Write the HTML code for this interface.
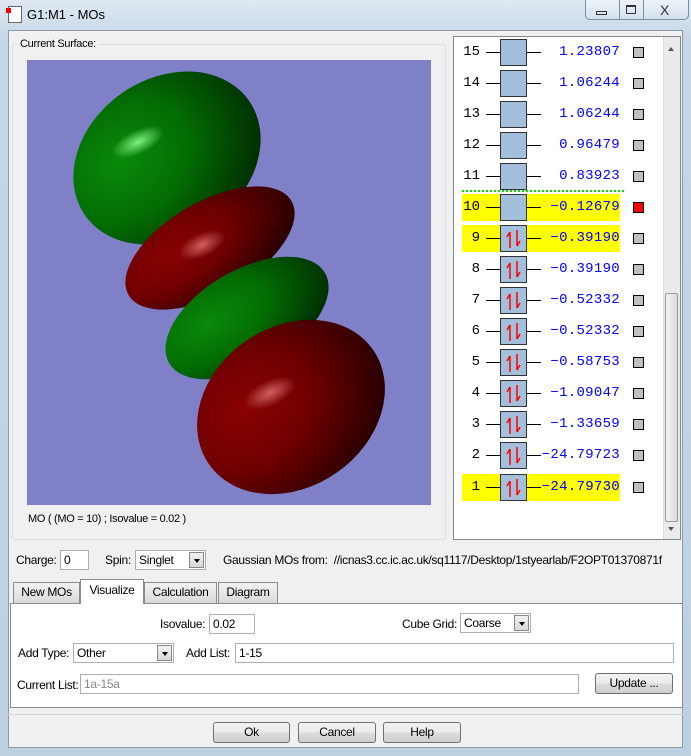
<!DOCTYPE html>
<html><head><meta charset="utf-8"><style>
*{margin:0;padding:0;box-sizing:border-box}
body{width:691px;height:756px;overflow:hidden;background:#c9d8e6;font-family:"Liberation Sans",sans-serif;font-size:12px;color:#000;position:relative;letter-spacing:-0.3px}
.a{position:absolute}
.frame{left:0;top:0;width:691px;height:756px;background:linear-gradient(#dfe9f3,#c5d6e6 40px,#bdd0e2);}
.content{left:8px;top:30px;width:675px;height:718px;background:#f0f0f0;border:1px solid #8d9aa8}
.row{position:absolute;left:462px;width:190px;height:27px}
.num{position:absolute;left:0;width:18px;text-align:right;top:5px;font-family:"Liberation Mono",monospace;font-size:14px;letter-spacing:0}
.ln{position:absolute;top:13px;height:1px;background:#000}
.box{position:absolute;left:38px;top:0;width:27px;height:27px;background:#a3bfdc;border:1px solid #333}
.en{position:absolute;left:70px;width:88px;text-align:right;top:5px;font-family:"Liberation Mono",monospace;font-size:14px;color:#0000ff;letter-spacing:0.3px}
.sq{position:absolute;left:171px;top:8px;width:11px;height:11px;background:#c0c0c0;border:1px solid #000}
.y{background:#ffff00}
.inp{position:absolute;background:#fff;border:1px solid #abadb3;height:20px;padding:2px 3px;font-size:12px}
.btn{position:absolute;border:1px solid #707070;border-radius:3px;background:linear-gradient(#f2f2f2,#ebebeb 50%,#dddddd 51%,#cfcfcf);text-align:center;line-height:19px;height:21px}
.dd{position:absolute;width:15px;height:16px;border:1px solid #888;background:linear-gradient(#f2f2f2,#d8d8d8)}
.dd:after{content:"";position:absolute;left:4px;top:6px;border:3px solid transparent;border-top:4px solid #000}
.tab{position:absolute;top:582px;height:21px;border:1px solid #898c95;border-bottom:none;background:linear-gradient(#f2f2f2,#d9d9d9);text-align:center;line-height:19px}
</style></head><body>
<div class="a frame"></div>
<div class="a" style="left:8px;top:6px;width:14px;height:17px;background:#fff;border:1px solid #666"></div>
<div class="a" style="left:6px;top:8px;width:5px;height:5px;background:#e00"></div>
<div class="a" style="left:27px;top:7px;font-size:13px;letter-spacing:0">G1:M1 - MOs</div>
<div class="a" style="left:585px;top:0;width:104px;height:20px;border:1px solid #7a8ea6;border-top:none;border-radius:0 0 5px 5px;background:linear-gradient(#eef3f9,#d5e1ee)"></div>
<div class="a" style="left:619px;top:0;width:1px;height:20px;background:#7a8ea6"></div>
<div class="a" style="left:643px;top:0;width:1px;height:20px;background:#7a8ea6"></div>
<div class="a" style="left:596px;top:11px;width:11px;height:4px;border:1px solid #333"></div>
<div class="a" style="left:626px;top:5px;width:10px;height:9px;border:1px solid #333;border-top-width:2px"></div>
<div class="a" style="left:660px;top:2px;font-size:14px;color:#333">X</div>
<div class="a content"></div>

<div class="a" style="left:12px;top:44px;width:434px;height:496px;border:1px solid #d5dfe5;border-radius:3px"></div>
<div class="a" style="left:17px;top:38px;padding:0 3px;background:#f0f0f0;font-size:11px">Current Surface:</div>
<div class="a" style="left:27px;top:60px;width:404px;height:445px;background:#8080c8;overflow:hidden">
<svg width="404" height="445" viewBox="27 60 404 445">
<defs>
<radialGradient id="g" cx="0.3" cy="0.35" r="0.8"><stop offset="0" stop-color="#0a8a0a"/><stop offset="0.45" stop-color="#036d03"/><stop offset="1" stop-color="#012601"/></radialGradient>
<radialGradient id="r" cx="0.3" cy="0.35" r="0.8"><stop offset="0" stop-color="#8a0202"/><stop offset="0.45" stop-color="#6e0000"/><stop offset="1" stop-color="#200000"/></radialGradient>
<radialGradient id="hg"><stop offset="0" stop-color="#7ef07e"/><stop offset="1" stop-color="#7ef07e" stop-opacity="0"/></radialGradient>
<radialGradient id="hr"><stop offset="0" stop-color="#d06060"/><stop offset="1" stop-color="#d06060" stop-opacity="0"/></radialGradient>
</defs>
<ellipse cx="167" cy="158" rx="100" ry="79" transform="rotate(-35 167 158)" fill="url(#g)"/>
<ellipse cx="138" cy="142" rx="28" ry="12" transform="rotate(-25 138 142)" fill="url(#hg)"/>
<line x1="161" y1="236" x2="228" y2="200" stroke="#9ff0f0" stroke-width="3"/>
<ellipse cx="210" cy="248" rx="94" ry="46" transform="rotate(-30 210 248)" fill="url(#r)"/>
<ellipse cx="202" cy="245" rx="25" ry="12" transform="rotate(-25 202 245)" fill="url(#hr)"/>
<ellipse cx="247" cy="318" rx="90" ry="48" transform="rotate(-30 247 318)" fill="url(#g)"/>
<line x1="230" y1="365" x2="297" y2="332" stroke="#90d8d8" stroke-width="3"/>
<ellipse cx="291" cy="407" rx="100" ry="80" transform="rotate(-35 291 407)" fill="url(#r)"/>
<ellipse cx="270" cy="393" rx="28" ry="13" transform="rotate(-25 270 393)" fill="url(#hr)"/>
</svg></div>
<div class="a" style="left:28px;top:513px;font-size:11px">MO ( (MO = 10) ; Isovalue = 0.02 )</div>

<div class="a" style="left:453px;top:36px;width:228px;height:504px;background:#fff;border:1px solid #828790"></div>
<div class="a" style="left:663px;top:37px;width:17px;height:502px;background:#eaeaea;border-left:1px solid #ddd"></div>
<div class="a" style="left:665px;top:293px;width:13px;height:229px;background:linear-gradient(90deg,#f3f3f3,#dcdcdc);border:1px solid #999;border-radius:2px"></div>
<div class="a" style="left:668px;top:44px;border:3px solid transparent;border-bottom:4px solid #555"></div>
<div class="a" style="left:668px;top:527px;border:3px solid transparent;border-top:4px solid #555"></div>
<div class="a" style="left:462px;top:190px;width:162px;border-top:2px dotted #00e000"></div>

<div class="row" style="top:39px"><div class="num">15</div><div class="ln" style="left:24px;width:55px"></div><div class="box"></div><div class="en">1.23807</div><div class="sq"></div></div>
<div class="row" style="top:70px"><div class="num">14</div><div class="ln" style="left:24px;width:55px"></div><div class="box"></div><div class="en">1.06244</div><div class="sq"></div></div>
<div class="row" style="top:101px"><div class="num">13</div><div class="ln" style="left:24px;width:55px"></div><div class="box"></div><div class="en">1.06244</div><div class="sq"></div></div>
<div class="row" style="top:132px"><div class="num">12</div><div class="ln" style="left:24px;width:55px"></div><div class="box"></div><div class="en">0.96479</div><div class="sq"></div></div>
<div class="row" style="top:163px"><div class="num">11</div><div class="ln" style="left:24px;width:55px"></div><div class="box"></div><div class="en">0.83923</div><div class="sq"></div></div>
<div class="row" style="top:194px"><div class="y a" style="left:0;top:0;width:158px;height:27px"></div><div class="num">10</div><div class="ln" style="left:24px;width:55px"></div><div class="box"></div><div class="en">−0.12679</div><div class="sq" style="background:#f00"></div></div>
<div class="row" style="top:225px"><div class="y a" style="left:0;top:0;width:158px;height:27px"></div><div class="num">9</div><div class="ln" style="left:24px;width:55px"></div><div class="box"><svg width="25" height="25"><path d="M9 22V6M9 6L6 11M16 4V20M16 20L19 15" stroke="#f00" stroke-width="1.5" fill="none"/></svg></div><div class="en">−0.39190</div><div class="sq"></div></div>
<div class="row" style="top:256px"><div class="num">8</div><div class="ln" style="left:24px;width:55px"></div><div class="box"><svg width="25" height="25"><path d="M9 22V6M9 6L6 11M16 4V20M16 20L19 15" stroke="#f00" stroke-width="1.5" fill="none"/></svg></div><div class="en">−0.39190</div><div class="sq"></div></div>
<div class="row" style="top:287px"><div class="num">7</div><div class="ln" style="left:24px;width:55px"></div><div class="box"><svg width="25" height="25"><path d="M9 22V6M9 6L6 11M16 4V20M16 20L19 15" stroke="#f00" stroke-width="1.5" fill="none"/></svg></div><div class="en">−0.52332</div><div class="sq"></div></div>
<div class="row" style="top:318px"><div class="num">6</div><div class="ln" style="left:24px;width:55px"></div><div class="box"><svg width="25" height="25"><path d="M9 22V6M9 6L6 11M16 4V20M16 20L19 15" stroke="#f00" stroke-width="1.5" fill="none"/></svg></div><div class="en">−0.52332</div><div class="sq"></div></div>
<div class="row" style="top:349px"><div class="num">5</div><div class="ln" style="left:24px;width:55px"></div><div class="box"><svg width="25" height="25"><path d="M9 22V6M9 6L6 11M16 4V20M16 20L19 15" stroke="#f00" stroke-width="1.5" fill="none"/></svg></div><div class="en">−0.58753</div><div class="sq"></div></div>
<div class="row" style="top:380px"><div class="num">4</div><div class="ln" style="left:24px;width:55px"></div><div class="box"><svg width="25" height="25"><path d="M9 22V6M9 6L6 11M16 4V20M16 20L19 15" stroke="#f00" stroke-width="1.5" fill="none"/></svg></div><div class="en">−1.09047</div><div class="sq"></div></div>
<div class="row" style="top:411px"><div class="num">3</div><div class="ln" style="left:24px;width:55px"></div><div class="box"><svg width="25" height="25"><path d="M9 22V6M9 6L6 11M16 4V20M16 20L19 15" stroke="#f00" stroke-width="1.5" fill="none"/></svg></div><div class="en">−1.33659</div><div class="sq"></div></div>
<div class="row" style="top:442px"><div class="num">2</div><div class="ln" style="left:24px;width:55px"></div><div class="box"><svg width="25" height="25"><path d="M9 22V6M9 6L6 11M16 4V20M16 20L19 15" stroke="#f00" stroke-width="1.5" fill="none"/></svg></div><div class="en">−24.79723</div><div class="sq"></div></div>
<div class="row" style="top:474px"><div class="y a" style="left:0;top:0;width:158px;height:27px"></div><div class="num">1</div><div class="ln" style="left:24px;width:55px"></div><div class="box"><svg width="25" height="25"><path d="M9 22V6M9 6L6 11M16 4V20M16 20L19 15" stroke="#f00" stroke-width="1.5" fill="none"/></svg></div><div class="en">−24.79730</div><div class="sq"></div></div>

<div class="a" style="left:16px;top:553px">Charge:</div>
<div class="inp" style="left:60px;top:550px;width:29px">0</div>
<div class="a" style="left:105px;top:553px">Spin:</div>
<div class="inp" style="left:135px;top:550px;width:71px;height:20px">Singlet</div>
<div class="dd" style="left:189px;top:552px"></div>
<div class="a" style="left:223px;top:553px;white-space:nowrap;width:460px;overflow:hidden">Gaussian MOs from:&nbsp; //icnas3.cc.ic.ac.uk/sq1117/Desktop/1styearlab/F2OPT01370871f</div>

<div class="a" style="left:10px;top:603px;width:673px;height:105px;background:#fff;border:1px solid #898c95"></div>
<div class="tab" style="left:13px;width:67px">New MOs</div>
<div class="tab" style="left:80px;top:579px;height:25px;width:64px;background:#fff;line-height:21px">Visualize</div>
<div class="tab" style="left:144px;width:73px">Calculation</div>
<div class="tab" style="left:218px;width:60px">Diagram</div>

<div class="a" style="left:160px;top:617px">Isovalue:</div>
<div class="inp" style="left:209px;top:614px;width:46px">0.02</div>
<div class="a" style="left:402px;top:617px">Cube Grid:</div>
<div class="inp" style="left:460px;top:613px;width:71px">Coarse</div>
<div class="dd" style="left:514px;top:615px"></div>

<div class="a" style="left:18px;top:646px">Add Type:</div>
<div class="inp" style="left:73px;top:643px;width:101px">Other</div>
<div class="dd" style="left:157px;top:645px"></div>
<div class="a" style="left:186px;top:646px">Add List:</div>
<div class="inp" style="left:235px;top:643px;width:439px">1-15</div>

<div class="a" style="left:17px;top:678px">Current List:</div>
<div class="inp" style="left:80px;top:674px;width:499px;color:#888">1a-15a</div>
<div class="btn" style="left:595px;top:673px;width:78px">Update ...</div>

<div class="a" style="left:8px;top:714px;width:675px;border-top:1px solid #d5d5d5"></div>
<div class="btn" style="left:213px;top:722px;width:77px">Ok</div>
<div class="btn" style="left:298px;top:722px;width:78px">Cancel</div>
<div class="btn" style="left:383px;top:722px;width:78px">Help</div>
</body></html>
